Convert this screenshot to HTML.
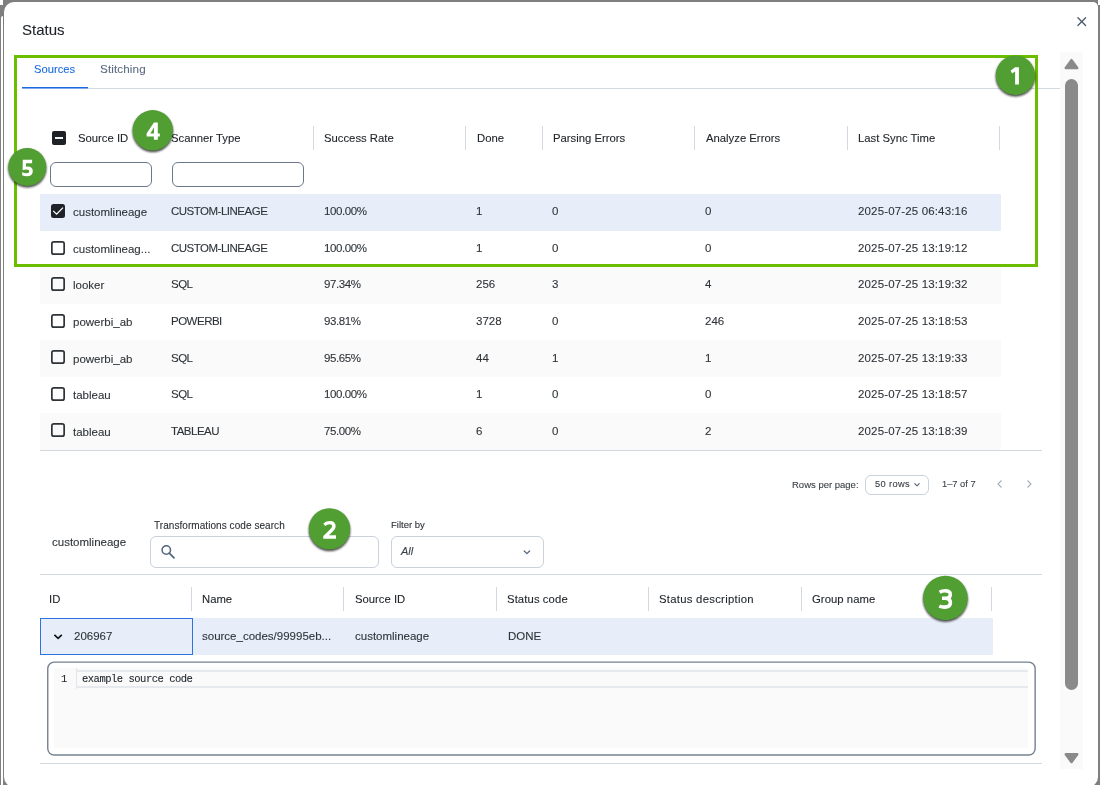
<!DOCTYPE html>
<html><head><meta charset="utf-8"><title>Status</title>
<style>
html,body{margin:0;padding:0;width:1100px;height:785px;overflow:hidden;background:#7f7f7f;}
body{position:relative;font-family:"Liberation Sans", sans-serif;}
.t{position:absolute;white-space:nowrap;will-change:transform;-webkit-text-stroke:0.1px currentColor;}
.b{position:absolute;}
.badge{position:absolute;border-radius:50%;background:#519e33;color:#fff;font-weight:bold;text-align:center;font-family:"Liberation Sans", sans-serif;box-shadow:1px 2px 2px rgba(0,0,0,0.55);}
</style></head><body>
<div class="b" style="left:0.00px;top:0.00px;width:1100.00px;height:785.00px;background:#7f7f7f"></div>
<div class="b" style="left:0.00px;top:0.00px;width:3.00px;height:5.00px;background:#fff"></div>
<div class="b" style="left:1098.00px;top:0.00px;width:2.00px;height:5.00px;background:#fff"></div>
<div class="b" style="left:1.00px;top:16.00px;width:2.00px;height:769.00px;background:#fff;border-top-left-radius:3px"></div>
<div class="b" style="left:4.00px;top:2.00px;width:1094.00px;height:785.00px;background:#fff;border-radius:10px 5px 10px 10px"></div>
<div class="t" style="left:21.80px;top:22.30px;font-size:15px;line-height:15px;color:#1f2329;font-weight:normal;font-style:normal;font-family:'Liberation Sans', sans-serif;">Status</div>
<svg class="b" style="left:1076px;top:16px" width="12" height="12" viewBox="0 0 12 12"><path d="M1.9 1.8L9.6 9.5M9.6 1.8L1.9 9.5" stroke="#4b5b6e" stroke-width="1.3" stroke-linecap="round"/></svg>
<div class="t" style="left:33.80px;top:63.72px;font-size:11.2px;line-height:11.2px;color:#1a6be0;font-weight:normal;font-style:normal;font-family:'Liberation Sans', sans-serif;">Sources</div>
<div class="t" style="left:99.80px;top:63.30px;font-size:11.7px;line-height:11.7px;color:#5d6d82;font-weight:normal;font-style:normal;font-family:'Liberation Sans', sans-serif;letter-spacing:0.1px">Stitching</div>
<div class="b" style="left:22.00px;top:88.00px;width:1038.00px;height:1.00px;background:#d3d9e1"></div>
<div class="b" style="left:22.00px;top:87.00px;width:66.00px;height:1.00px;background:#1a6be0"></div>
<div class="b" style="left:22.00px;top:88.00px;width:66.00px;height:1.00px;background:#7fa9ee"></div>
<div class="t" style="left:77.50px;top:132.53px;font-size:11.3px;line-height:11.3px;color:#22272c;font-weight:normal;font-style:normal;font-family:'Liberation Sans', sans-serif;">Source ID</div>
<div class="t" style="left:171.40px;top:132.53px;font-size:11.3px;line-height:11.3px;color:#22272c;font-weight:normal;font-style:normal;font-family:'Liberation Sans', sans-serif;">Scanner Type</div>
<div class="t" style="left:324.40px;top:132.53px;font-size:11.3px;line-height:11.3px;color:#22272c;font-weight:normal;font-style:normal;font-family:'Liberation Sans', sans-serif;">Success Rate</div>
<div class="t" style="left:476.90px;top:132.53px;font-size:11.3px;line-height:11.3px;color:#22272c;font-weight:normal;font-style:normal;font-family:'Liberation Sans', sans-serif;">Done</div>
<div class="t" style="left:553.15px;top:132.53px;font-size:11.3px;line-height:11.3px;color:#22272c;font-weight:normal;font-style:normal;font-family:'Liberation Sans', sans-serif;">Parsing Errors</div>
<div class="t" style="left:705.65px;top:132.53px;font-size:11.3px;line-height:11.3px;color:#22272c;font-weight:normal;font-style:normal;font-family:'Liberation Sans', sans-serif;">Analyze Errors</div>
<div class="t" style="left:858.15px;top:132.53px;font-size:11.3px;line-height:11.3px;color:#22272c;font-weight:normal;font-style:normal;font-family:'Liberation Sans', sans-serif;">Last Sync Time</div>
<div class="b" style="left:161.00px;top:126.00px;width:1.00px;height:24.00px;background:#d3d9e1"></div>
<div class="b" style="left:313.00px;top:126.00px;width:1.00px;height:24.00px;background:#d3d9e1"></div>
<div class="b" style="left:465.00px;top:126.00px;width:1.00px;height:24.00px;background:#d3d9e1"></div>
<div class="b" style="left:542.00px;top:126.00px;width:1.00px;height:24.00px;background:#d3d9e1"></div>
<div class="b" style="left:694.00px;top:126.00px;width:1.00px;height:24.00px;background:#d3d9e1"></div>
<div class="b" style="left:847.00px;top:126.00px;width:1.00px;height:24.00px;background:#d3d9e1"></div>
<div class="b" style="left:999.00px;top:126.00px;width:1.00px;height:24.00px;background:#d3d9e1"></div>
<div class="b" style="left:52.00px;top:131.00px;width:14.00px;height:14.00px;background:#1e2125;border-radius:2px"></div>
<div class="b" style="left:55.00px;top:137.00px;width:8.00px;height:2.00px;background:#f4f4f4"></div>
<div class="b" style="left:50.00px;top:162.00px;width:102.00px;height:25.00px;border:1px solid #6a7889;border-radius:6px;box-sizing:border-box"></div>
<div class="b" style="left:172.00px;top:162.00px;width:132.00px;height:25.00px;border:1px solid #6a7889;border-radius:6px;box-sizing:border-box"></div>
<div class="b" style="left:40.00px;top:194.00px;width:961.00px;height:36.57px;background:#e8eef9"></div>
<div class="b" style="left:40.00px;top:230.57px;width:961.00px;height:36.57px;background:#ffffff"></div>
<div class="b" style="left:40.00px;top:267.14px;width:961.00px;height:36.57px;background:#fafafa"></div>
<div class="b" style="left:40.00px;top:303.71px;width:961.00px;height:36.57px;background:#ffffff"></div>
<div class="b" style="left:40.00px;top:340.29px;width:961.00px;height:36.57px;background:#fafafa"></div>
<div class="b" style="left:40.00px;top:376.86px;width:961.00px;height:36.57px;background:#ffffff"></div>
<div class="b" style="left:40.00px;top:413.43px;width:961.00px;height:36.57px;background:#fafafa"></div>
<svg class="b" style="left:51px;top:204.00px" width="14" height="14" viewBox="0 0 14 14"><rect x="0" y="0" width="14" height="14" rx="2.5" fill="#1f2329"/><path d="M2.2 6.9L5.6 10.2L12.0 3.6" stroke="#fff" stroke-width="1.3" fill="none"/></svg>
<div class="t" style="left:73.30px;top:207.27px;font-size:11.5px;line-height:11.5px;color:#2e3338;font-weight:normal;font-style:normal;font-family:'Liberation Sans', sans-serif;">customlineage</div>
<div class="t" style="left:171.15px;top:206.27px;font-size:11.5px;line-height:11.5px;color:#2e3338;font-weight:normal;font-style:normal;font-family:'Liberation Sans', sans-serif;letter-spacing:-0.5px">CUSTOM-LINEAGE</div>
<div class="t" style="left:323.90px;top:206.27px;font-size:11.5px;line-height:11.5px;color:#2e3338;font-weight:normal;font-style:normal;font-family:'Liberation Sans', sans-serif;letter-spacing:-0.4px">100.00%</div>
<div class="t" style="left:476.40px;top:206.27px;font-size:11.5px;line-height:11.5px;color:#2e3338;font-weight:normal;font-style:normal;font-family:'Liberation Sans', sans-serif;">1</div>
<div class="t" style="left:552.40px;top:206.27px;font-size:11.5px;line-height:11.5px;color:#2e3338;font-weight:normal;font-style:normal;font-family:'Liberation Sans', sans-serif;">0</div>
<div class="t" style="left:705.40px;top:206.27px;font-size:11.5px;line-height:11.5px;color:#2e3338;font-weight:normal;font-style:normal;font-family:'Liberation Sans', sans-serif;">0</div>
<div class="t" style="left:858.40px;top:206.27px;font-size:11.5px;line-height:11.5px;color:#2e3338;font-weight:normal;font-style:normal;font-family:'Liberation Sans', sans-serif;letter-spacing:0.15px">2025-07-25 06:43:16</div>
<svg class="b" style="left:51px;top:240.57px" width="14" height="14" viewBox="0 0 14 14"><rect x="0.85" y="0.85" width="12.3" height="12.3" rx="2" fill="none" stroke="#2e3338" stroke-width="1.7"/></svg>
<div class="t" style="left:73.30px;top:243.84px;font-size:11.5px;line-height:11.5px;color:#2e3338;font-weight:normal;font-style:normal;font-family:'Liberation Sans', sans-serif;">customlineag...</div>
<div class="t" style="left:171.15px;top:242.84px;font-size:11.5px;line-height:11.5px;color:#2e3338;font-weight:normal;font-style:normal;font-family:'Liberation Sans', sans-serif;letter-spacing:-0.5px">CUSTOM-LINEAGE</div>
<div class="t" style="left:323.90px;top:242.84px;font-size:11.5px;line-height:11.5px;color:#2e3338;font-weight:normal;font-style:normal;font-family:'Liberation Sans', sans-serif;letter-spacing:-0.4px">100.00%</div>
<div class="t" style="left:476.40px;top:242.84px;font-size:11.5px;line-height:11.5px;color:#2e3338;font-weight:normal;font-style:normal;font-family:'Liberation Sans', sans-serif;">1</div>
<div class="t" style="left:552.40px;top:242.84px;font-size:11.5px;line-height:11.5px;color:#2e3338;font-weight:normal;font-style:normal;font-family:'Liberation Sans', sans-serif;">0</div>
<div class="t" style="left:705.40px;top:242.84px;font-size:11.5px;line-height:11.5px;color:#2e3338;font-weight:normal;font-style:normal;font-family:'Liberation Sans', sans-serif;">0</div>
<div class="t" style="left:858.40px;top:242.84px;font-size:11.5px;line-height:11.5px;color:#2e3338;font-weight:normal;font-style:normal;font-family:'Liberation Sans', sans-serif;letter-spacing:0.15px">2025-07-25 13:19:12</div>
<svg class="b" style="left:51px;top:277.14px" width="14" height="14" viewBox="0 0 14 14"><rect x="0.85" y="0.85" width="12.3" height="12.3" rx="2" fill="none" stroke="#2e3338" stroke-width="1.7"/></svg>
<div class="t" style="left:73.30px;top:280.41px;font-size:11.5px;line-height:11.5px;color:#2e3338;font-weight:normal;font-style:normal;font-family:'Liberation Sans', sans-serif;">looker</div>
<div class="t" style="left:171.15px;top:279.41px;font-size:11.5px;line-height:11.5px;color:#2e3338;font-weight:normal;font-style:normal;font-family:'Liberation Sans', sans-serif;letter-spacing:-0.5px">SQL</div>
<div class="t" style="left:323.90px;top:279.41px;font-size:11.5px;line-height:11.5px;color:#2e3338;font-weight:normal;font-style:normal;font-family:'Liberation Sans', sans-serif;letter-spacing:-0.4px">97.34%</div>
<div class="t" style="left:476.40px;top:279.41px;font-size:11.5px;line-height:11.5px;color:#2e3338;font-weight:normal;font-style:normal;font-family:'Liberation Sans', sans-serif;">256</div>
<div class="t" style="left:552.40px;top:279.41px;font-size:11.5px;line-height:11.5px;color:#2e3338;font-weight:normal;font-style:normal;font-family:'Liberation Sans', sans-serif;">3</div>
<div class="t" style="left:705.40px;top:279.41px;font-size:11.5px;line-height:11.5px;color:#2e3338;font-weight:normal;font-style:normal;font-family:'Liberation Sans', sans-serif;">4</div>
<div class="t" style="left:858.40px;top:279.41px;font-size:11.5px;line-height:11.5px;color:#2e3338;font-weight:normal;font-style:normal;font-family:'Liberation Sans', sans-serif;letter-spacing:0.15px">2025-07-25 13:19:32</div>
<svg class="b" style="left:51px;top:313.71px" width="14" height="14" viewBox="0 0 14 14"><rect x="0.85" y="0.85" width="12.3" height="12.3" rx="2" fill="none" stroke="#2e3338" stroke-width="1.7"/></svg>
<div class="t" style="left:73.30px;top:316.98px;font-size:11.5px;line-height:11.5px;color:#2e3338;font-weight:normal;font-style:normal;font-family:'Liberation Sans', sans-serif;">powerbi_ab</div>
<div class="t" style="left:171.15px;top:315.98px;font-size:11.5px;line-height:11.5px;color:#2e3338;font-weight:normal;font-style:normal;font-family:'Liberation Sans', sans-serif;letter-spacing:-0.5px">POWERBI</div>
<div class="t" style="left:323.90px;top:315.98px;font-size:11.5px;line-height:11.5px;color:#2e3338;font-weight:normal;font-style:normal;font-family:'Liberation Sans', sans-serif;letter-spacing:-0.4px">93.81%</div>
<div class="t" style="left:476.40px;top:315.98px;font-size:11.5px;line-height:11.5px;color:#2e3338;font-weight:normal;font-style:normal;font-family:'Liberation Sans', sans-serif;">3728</div>
<div class="t" style="left:552.40px;top:315.98px;font-size:11.5px;line-height:11.5px;color:#2e3338;font-weight:normal;font-style:normal;font-family:'Liberation Sans', sans-serif;">0</div>
<div class="t" style="left:705.40px;top:315.98px;font-size:11.5px;line-height:11.5px;color:#2e3338;font-weight:normal;font-style:normal;font-family:'Liberation Sans', sans-serif;">246</div>
<div class="t" style="left:858.40px;top:315.98px;font-size:11.5px;line-height:11.5px;color:#2e3338;font-weight:normal;font-style:normal;font-family:'Liberation Sans', sans-serif;letter-spacing:0.15px">2025-07-25 13:18:53</div>
<svg class="b" style="left:51px;top:350.29px" width="14" height="14" viewBox="0 0 14 14"><rect x="0.85" y="0.85" width="12.3" height="12.3" rx="2" fill="none" stroke="#2e3338" stroke-width="1.7"/></svg>
<div class="t" style="left:73.30px;top:353.55px;font-size:11.5px;line-height:11.5px;color:#2e3338;font-weight:normal;font-style:normal;font-family:'Liberation Sans', sans-serif;">powerbi_ab</div>
<div class="t" style="left:171.15px;top:352.55px;font-size:11.5px;line-height:11.5px;color:#2e3338;font-weight:normal;font-style:normal;font-family:'Liberation Sans', sans-serif;letter-spacing:-0.5px">SQL</div>
<div class="t" style="left:323.90px;top:352.55px;font-size:11.5px;line-height:11.5px;color:#2e3338;font-weight:normal;font-style:normal;font-family:'Liberation Sans', sans-serif;letter-spacing:-0.4px">95.65%</div>
<div class="t" style="left:476.40px;top:352.55px;font-size:11.5px;line-height:11.5px;color:#2e3338;font-weight:normal;font-style:normal;font-family:'Liberation Sans', sans-serif;">44</div>
<div class="t" style="left:552.40px;top:352.55px;font-size:11.5px;line-height:11.5px;color:#2e3338;font-weight:normal;font-style:normal;font-family:'Liberation Sans', sans-serif;">1</div>
<div class="t" style="left:705.40px;top:352.55px;font-size:11.5px;line-height:11.5px;color:#2e3338;font-weight:normal;font-style:normal;font-family:'Liberation Sans', sans-serif;">1</div>
<div class="t" style="left:858.40px;top:352.55px;font-size:11.5px;line-height:11.5px;color:#2e3338;font-weight:normal;font-style:normal;font-family:'Liberation Sans', sans-serif;letter-spacing:0.15px">2025-07-25 13:19:33</div>
<svg class="b" style="left:51px;top:386.86px" width="14" height="14" viewBox="0 0 14 14"><rect x="0.85" y="0.85" width="12.3" height="12.3" rx="2" fill="none" stroke="#2e3338" stroke-width="1.7"/></svg>
<div class="t" style="left:73.30px;top:390.12px;font-size:11.5px;line-height:11.5px;color:#2e3338;font-weight:normal;font-style:normal;font-family:'Liberation Sans', sans-serif;">tableau</div>
<div class="t" style="left:171.15px;top:389.12px;font-size:11.5px;line-height:11.5px;color:#2e3338;font-weight:normal;font-style:normal;font-family:'Liberation Sans', sans-serif;letter-spacing:-0.5px">SQL</div>
<div class="t" style="left:323.90px;top:389.12px;font-size:11.5px;line-height:11.5px;color:#2e3338;font-weight:normal;font-style:normal;font-family:'Liberation Sans', sans-serif;letter-spacing:-0.4px">100.00%</div>
<div class="t" style="left:476.40px;top:389.12px;font-size:11.5px;line-height:11.5px;color:#2e3338;font-weight:normal;font-style:normal;font-family:'Liberation Sans', sans-serif;">1</div>
<div class="t" style="left:552.40px;top:389.12px;font-size:11.5px;line-height:11.5px;color:#2e3338;font-weight:normal;font-style:normal;font-family:'Liberation Sans', sans-serif;">0</div>
<div class="t" style="left:705.40px;top:389.12px;font-size:11.5px;line-height:11.5px;color:#2e3338;font-weight:normal;font-style:normal;font-family:'Liberation Sans', sans-serif;">0</div>
<div class="t" style="left:858.40px;top:389.12px;font-size:11.5px;line-height:11.5px;color:#2e3338;font-weight:normal;font-style:normal;font-family:'Liberation Sans', sans-serif;letter-spacing:0.15px">2025-07-25 13:18:57</div>
<svg class="b" style="left:51px;top:423.43px" width="14" height="14" viewBox="0 0 14 14"><rect x="0.85" y="0.85" width="12.3" height="12.3" rx="2" fill="none" stroke="#2e3338" stroke-width="1.7"/></svg>
<div class="t" style="left:73.30px;top:426.69px;font-size:11.5px;line-height:11.5px;color:#2e3338;font-weight:normal;font-style:normal;font-family:'Liberation Sans', sans-serif;">tableau</div>
<div class="t" style="left:171.15px;top:425.69px;font-size:11.5px;line-height:11.5px;color:#2e3338;font-weight:normal;font-style:normal;font-family:'Liberation Sans', sans-serif;letter-spacing:-0.5px">TABLEAU</div>
<div class="t" style="left:323.90px;top:425.69px;font-size:11.5px;line-height:11.5px;color:#2e3338;font-weight:normal;font-style:normal;font-family:'Liberation Sans', sans-serif;letter-spacing:-0.4px">75.00%</div>
<div class="t" style="left:476.40px;top:425.69px;font-size:11.5px;line-height:11.5px;color:#2e3338;font-weight:normal;font-style:normal;font-family:'Liberation Sans', sans-serif;">6</div>
<div class="t" style="left:552.40px;top:425.69px;font-size:11.5px;line-height:11.5px;color:#2e3338;font-weight:normal;font-style:normal;font-family:'Liberation Sans', sans-serif;">0</div>
<div class="t" style="left:705.40px;top:425.69px;font-size:11.5px;line-height:11.5px;color:#2e3338;font-weight:normal;font-style:normal;font-family:'Liberation Sans', sans-serif;">2</div>
<div class="t" style="left:858.40px;top:425.69px;font-size:11.5px;line-height:11.5px;color:#2e3338;font-weight:normal;font-style:normal;font-family:'Liberation Sans', sans-serif;letter-spacing:0.15px">2025-07-25 13:18:39</div>
<div class="b" style="left:40.00px;top:450.00px;width:1002.00px;height:1.00px;background:#d3d9e1"></div>
<div class="t" style="left:792.20px;top:479.76px;font-size:9.5px;line-height:9.5px;color:#3b4046;font-weight:normal;font-style:normal;font-family:'Liberation Sans', sans-serif;">Rows per page:</div>
<div class="b" style="left:865.00px;top:475.00px;width:64.00px;height:20.00px;border:1px solid #c9d1db;border-radius:6px;box-sizing:border-box"></div>
<div class="t" style="left:875.30px;top:480.43px;font-size:9.3px;line-height:9.3px;color:#3b4046;font-weight:normal;font-style:normal;font-family:'Liberation Sans', sans-serif;letter-spacing:0.35px">50 rows</div>
<svg class="b" style="left:913px;top:481px" width="8" height="7" viewBox="0 0 8 7"><path d="M1.5 2.3L4 4.8L6.5 2.3" stroke="#4b5b6e" stroke-width="1.1" fill="none"/></svg>
<div class="t" style="left:941.50px;top:479.93px;font-size:9.3px;line-height:9.3px;color:#3b4046;font-weight:normal;font-style:normal;font-family:'Liberation Sans', sans-serif;">1–7 of 7</div>
<svg class="b" style="left:995px;top:479px" width="9" height="10" viewBox="0 0 9 10"><path d="M6.5 1.5L3 5L6.5 8.5" stroke="#a3adba" stroke-width="1.1" fill="none"/></svg>
<svg class="b" style="left:1025px;top:479px" width="9" height="10" viewBox="0 0 9 10"><path d="M2.5 1.5L6 5L2.5 8.5" stroke="#a3adba" stroke-width="1.1" fill="none"/></svg>
<div class="t" style="left:52.10px;top:537.47px;font-size:11.5px;line-height:11.5px;color:#2e3338;font-weight:normal;font-style:normal;font-family:'Liberation Sans', sans-serif;">customlineage</div>
<div class="t" style="left:153.60px;top:520.93px;font-size:10.0px;line-height:10.0px;color:#2b3036;font-weight:normal;font-style:normal;font-family:'Liberation Sans', sans-serif;letter-spacing:0.06px">Transformations code search</div>
<div class="b" style="left:150.00px;top:536.00px;width:228.50px;height:32.00px;border:1px solid #c9d1db;border-radius:6px;box-sizing:border-box"></div>
<svg class="b" style="left:160px;top:545px" width="16" height="15" viewBox="0 0 16 15"><circle cx="6.3" cy="5.0" r="4.2" stroke="#53647a" stroke-width="1.5" fill="none"/><path d="M9.3 8.2L14.0 12.9" stroke="#53647a" stroke-width="1.7" stroke-linecap="round"/></svg>
<div class="t" style="left:390.80px;top:519.86px;font-size:9.5px;line-height:9.5px;color:#2b3036;font-weight:normal;font-style:normal;font-family:'Liberation Sans', sans-serif;">Filter by</div>
<div class="b" style="left:391.40px;top:536.40px;width:152.20px;height:31.20px;border:1px solid #c9d1db;border-radius:6px;box-sizing:border-box"></div>
<div class="t" style="left:401.20px;top:545.99px;font-size:11px;line-height:11px;color:#3b4046;font-weight:normal;font-style:italic;font-family:'Liberation Sans', sans-serif;">All</div>
<svg class="b" style="left:522px;top:547.5px" width="9" height="8" viewBox="0 0 9 8"><path d="M2.2 3.0L4.9 5.6L7.6 3.0" stroke="#53647a" stroke-width="1.25" stroke-linecap="round" stroke-linejoin="round" fill="none"/></svg>
<div class="b" style="left:40.00px;top:574.00px;width:1002.00px;height:1.00px;background:#d3d9e1"></div>
<div class="t" style="left:49.40px;top:593.53px;font-size:11.3px;line-height:11.3px;color:#22272c;font-weight:normal;font-style:normal;font-family:'Liberation Sans', sans-serif;letter-spacing:0px">ID</div>
<div class="t" style="left:202.10px;top:593.53px;font-size:11.3px;line-height:11.3px;color:#22272c;font-weight:normal;font-style:normal;font-family:'Liberation Sans', sans-serif;letter-spacing:0px">Name</div>
<div class="t" style="left:354.90px;top:593.53px;font-size:11.3px;line-height:11.3px;color:#22272c;font-weight:normal;font-style:normal;font-family:'Liberation Sans', sans-serif;letter-spacing:0px">Source ID</div>
<div class="t" style="left:507.00px;top:593.53px;font-size:11.3px;line-height:11.3px;color:#22272c;font-weight:normal;font-style:normal;font-family:'Liberation Sans', sans-serif;letter-spacing:0.1px">Status code</div>
<div class="t" style="left:659.40px;top:593.53px;font-size:11.3px;line-height:11.3px;color:#22272c;font-weight:normal;font-style:normal;font-family:'Liberation Sans', sans-serif;letter-spacing:0.28px">Status description</div>
<div class="t" style="left:812.00px;top:593.53px;font-size:11.3px;line-height:11.3px;color:#22272c;font-weight:normal;font-style:normal;font-family:'Liberation Sans', sans-serif;letter-spacing:0.05px">Group name</div>
<div class="b" style="left:190.80px;top:587.00px;width:1.00px;height:23.50px;background:#d3d9e1"></div>
<div class="b" style="left:342.90px;top:587.00px;width:1.00px;height:23.50px;background:#d3d9e1"></div>
<div class="b" style="left:495.60px;top:587.00px;width:1.00px;height:23.50px;background:#d3d9e1"></div>
<div class="b" style="left:647.70px;top:587.00px;width:1.00px;height:23.50px;background:#d3d9e1"></div>
<div class="b" style="left:800.90px;top:587.00px;width:1.00px;height:23.50px;background:#d3d9e1"></div>
<div class="b" style="left:991.00px;top:587.00px;width:1.00px;height:23.50px;background:#d3d9e1"></div>
<div class="b" style="left:40.00px;top:617.50px;width:953.00px;height:37.50px;background:#e8eef9"></div>
<div class="b" style="left:40.00px;top:618.00px;width:153.00px;height:37.00px;border:1px solid #2b74e0;box-sizing:border-box"></div>
<svg class="b" style="left:52px;top:631px" width="12" height="11" viewBox="0 0 12 11"><path d="M2.4 3.9L6.1 7.4L9.8 3.9" stroke="#111417" stroke-width="1.7" fill="none"/></svg>
<div class="t" style="left:73.80px;top:630.57px;font-size:11.5px;line-height:11.5px;color:#2e3338;font-weight:normal;font-style:normal;font-family:'Liberation Sans', sans-serif;">206967</div>
<div class="t" style="left:202.20px;top:630.57px;font-size:11.5px;line-height:11.5px;color:#2e3338;font-weight:normal;font-style:normal;font-family:'Liberation Sans', sans-serif;">source_codes/99995eb...</div>
<div class="t" style="left:355.00px;top:630.57px;font-size:11.5px;line-height:11.5px;color:#2e3338;font-weight:normal;font-style:normal;font-family:'Liberation Sans', sans-serif;">customlineage</div>
<div class="t" style="left:507.70px;top:630.57px;font-size:11.5px;line-height:11.5px;color:#2e3338;font-weight:normal;font-style:normal;font-family:'Liberation Sans', sans-serif;">DONE</div>
<svg class="b" style="left:46px;top:660px" width="992" height="98" viewBox="0 0 992 98"><rect x="1.75" y="2.15" width="987.4" height="92.9" rx="6.5" fill="none" stroke="#74828f" stroke-width="1.4"/></svg>
<div class="b" style="left:53.80px;top:668.00px;width:974.20px;height:80.40px;background:#fafafa"></div>
<div class="b" style="left:77.00px;top:670.00px;width:951.00px;height:18.00px;border-top:2px solid #e6e9ed;border-bottom:2px solid #e6e9ed;box-sizing:border-box"></div>
<div class="b" style="left:76.20px;top:668.00px;width:1.00px;height:21.40px;background:#e3e6ea"></div>
<div class="t" style="left:60.60px;top:674.01px;font-size:10.5px;line-height:10.5px;color:#1f2329;font-weight:normal;font-style:normal;font-family:'Liberation Mono', monospace;">1</div>
<div class="t" style="left:82.00px;top:674.01px;font-size:10.5px;line-height:10.5px;color:#1f2329;font-weight:normal;font-style:normal;font-family:'Liberation Mono', monospace;letter-spacing:-0.49px">example source code</div>
<div class="b" style="left:40.00px;top:763.00px;width:1002.00px;height:1.00px;background:#d3d9e1"></div>
<div class="b" style="left:1060.00px;top:52.00px;width:23.00px;height:717.00px;background:#fafafa"></div>
<svg class="b" style="left:1063px;top:57px" width="17" height="14" viewBox="0 0 17 14"><path d="M8.5 3.2L14.2 10.9H2.8Z" fill="#8a8a8a" stroke="#8a8a8a" stroke-width="2.6" stroke-linejoin="round"/></svg>
<div class="b" style="left:1065.00px;top:79.00px;width:13.00px;height:611.00px;background:#8a8a8a;border-radius:6.5px"></div>
<svg class="b" style="left:1063px;top:751px" width="17" height="14" viewBox="0 0 17 14"><path d="M2.8 3.2H14.2L8.5 11Z" fill="#8a8a8a" stroke="#8a8a8a" stroke-width="2.6" stroke-linejoin="round"/></svg>
<div class="b" style="left:1098.00px;top:5.00px;width:2.00px;height:780.00px;background:#7f7f7f"></div>
<div class="b" style="left:14.00px;top:55.00px;width:1024.00px;height:212.00px;border:3px solid #6cbc00;box-sizing:border-box"></div>
<svg class="b" style="left:0;top:0" width="1100" height="785" viewBox="0 0 1100 785"><defs><filter id="bl" x="-20%" y="-20%" width="140%" height="140%"><feGaussianBlur stdDeviation="0.8"/></filter></defs><circle cx="1015.4" cy="76.8" r="19.7" fill="rgba(20,20,20,0.85)" filter="url(#bl)"/><circle cx="1015.4" cy="75.3" r="19.7" fill="#519e33"/><circle cx="329.5" cy="530.4" r="20.7" fill="rgba(20,20,20,0.85)" filter="url(#bl)"/><circle cx="329.5" cy="528.9" r="20.7" fill="#519e33"/><circle cx="945.4" cy="599.5" r="22.3" fill="rgba(20,20,20,0.85)" filter="url(#bl)"/><circle cx="945.4" cy="598.0" r="22.3" fill="#519e33"/><circle cx="152.8" cy="131.8" r="20.2" fill="rgba(20,20,20,0.85)" filter="url(#bl)"/><circle cx="152.8" cy="130.3" r="20.2" fill="#519e33"/><circle cx="27.3" cy="168.5" r="19.0" fill="rgba(20,20,20,0.85)" filter="url(#bl)"/><circle cx="27.3" cy="167.0" r="19.0" fill="#519e33"/><path d="M1015.0 67.2 L1018.9 67.2 L1018.9 84.5 L1015.1 84.5 L1015.1 71.4 L1012.2 73.5 L1010.6 70.8 Z" fill="#ffffff"/><path d="M323.3 523.4 Q326.3 521.0 329.7 521.0 Q335.7 521.0 335.7 526.6 Q335.7 529.3 332.3 531.9 L328.9 535.3 L336.0 535.3 L336.0 538.8 L323.3 538.8 L323.3 536.1 L329.0 530.4 Q332.1 527.4 332.1 526.5 Q332.1 524.2 329.5 524.2 Q327.2 524.2 325.1 526.0 Z" fill="#ffffff"/><path d="M939.6 592.2 Q942.0 590.7 945.0 590.7 Q950.3 590.7 950.3 594.4 Q950.3 598.3 945.0 598.3 L942.0 598.3 M945.0 598.3 Q950.4 598.3 950.4 602.8 Q950.4 607.1 944.6 607.1 Q941.5 607.1 939.3 606.0" stroke="#ffffff" stroke-width="3.6" fill="none"/><path fill-rule="evenodd" d="M153.9 122.5 L157.8 122.5 L157.8 133.4 L159.8 133.4 L159.8 136.6 L157.8 136.6 L157.8 139.8 L153.9 139.8 L153.9 136.6 L146.6 136.6 L146.6 133.6 Z M150.3 133.4 L154.0 133.4 L154.0 127.4 Z" fill="#ffffff"/><path d="M22.8 159.8 L32.1 159.8 L32.1 163.3 L26.1 163.3 L25.9 166.8 Q26.6 166.6 27.4 166.6 Q32.8 166.6 32.8 171.2 Q32.8 176.2 26.8 176.2 Q24.2 176.2 22.1 175.2 L22.3 172.2 Q24.4 173.2 26.6 173.2 Q29.3 173.2 29.3 171.2 Q29.3 169.4 26.4 169.4 Q24.6 169.4 22.6 170.0 Z" fill="#ffffff"/></svg>
</body></html>
